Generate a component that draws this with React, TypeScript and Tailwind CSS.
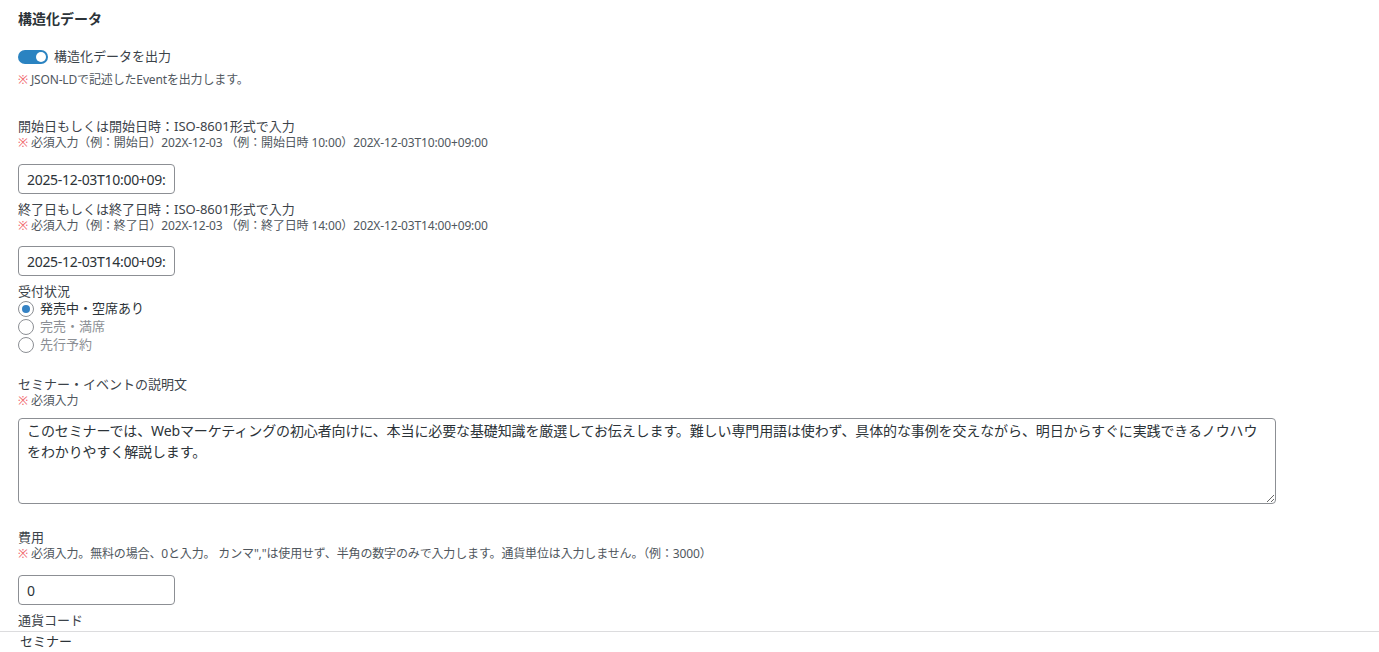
import React from 'react';

const font = "font-['Noto_Sans','Noto_Sans_CJK_JP',sans-serif]";

function Note({ children }: { children: React.ReactNode }) {
  return (
    <p className="text-[12px] leading-[16px] text-[#50575e] tracking-[-0.15px]">
      <span className="text-[#f0646a]">※</span> {children}
    </p>
  );
}

function Label({ children, className = '' }: { children: React.ReactNode; className?: string }) {
  return <p className={`text-[13px] leading-[18px] text-[#3c434a] ${className}`}>{children}</p>;
}

function TextInput({ value, className = '' }: { value: string; className?: string }) {
  return (
    <input
      type="text"
      defaultValue={value}
      className={`block w-[157px] h-[30px] px-2 rounded-[4px] border border-[#8c8f94] bg-white text-[14px] tracking-[-0.3px] text-[#2c3338] outline-none ${className}`}
    />
  );
}

function Radio({ label, checked = false }: { label: string; checked?: boolean }) {
  return (
    <label className="flex items-center gap-[6px] h-[18px]">
      <span className="flex items-center justify-center w-4 h-4 rounded-full border border-[#8c8f94] bg-white">
        {checked && <span className="w-2 h-2 rounded-full bg-[#3582c4]" />}
      </span>
      <span className={`text-[13px] ${checked ? 'text-[#2c3338]' : 'text-[#8c8f94]'}`}>{label}</span>
    </label>
  );
}

export default function App() {
  const description =
    'このセミナーでは、Webマーケティングの初心者向けに、本当に必要な基礎知識を厳選してお伝えします。難しい専門用語は使わず、具体的な事例を交えながら、明日からすぐに実践できるノウハウをわかりやすく解説します。';

  return (
    <div className={`h-screen flex flex-col bg-white ${font}`}>
      <main className="flex-1 overflow-hidden px-[18px]">
        <h2 className="mt-[10px] text-[14px] leading-[18px] font-bold text-[#2c3338]">構造化データ</h2>

        <div className="mt-[19px] flex items-center gap-[6px] h-5">
          <span className="relative w-[30px] h-[14px] rounded-full bg-[#2a83c1]">
            <span className="absolute right-[2px] top-[2px] w-[10px] h-[10px] rounded-full bg-white" />
          </span>
          <span className="text-[13px] text-[#3c434a]">構造化データを出力</span>
        </div>
        <div className="mt-[5px]">
          <Note>JSON-LDで記述したEventを出力します。</Note>
        </div>

        <Label className="mt-[29px]">開始日もしくは開始日時：ISO-8601形式で入力</Label>
        <Note>必須入力（例：開始日）202X-12-03 （例：開始日時 10:00）202X-12-03T10:00+09:00</Note>
        <TextInput value="2025-12-03T10:00+09:00" className="mt-[13px]" />

        <Label className="mt-[6px]">終了日もしくは終了日時：ISO-8601形式で入力</Label>
        <Note>必須入力（例：終了日）202X-12-03 （例：終了日時 14:00）202X-12-03T14:00+09:00</Note>
        <TextInput value="2025-12-03T14:00+09:00" className="mt-[12px]" />

        <Label className="mt-[6px]">受付状況</Label>
        <div className="flex flex-col">
          <Radio label="発売中・空席あり" checked />
          <Radio label="完売・満席" />
          <Radio label="先行予約" />
        </div>

        <Label className="mt-[21px]">セミナー・イベントの説明文</Label>
        <Note>必須入力</Note>
        <textarea
          defaultValue={description}
          className="mt-[9px] block w-[1258px] h-[86px] px-2 py-[1px] rounded-[4px] border border-[#8c8f94] bg-white text-[14px] leading-[21px] tracking-[-0.12px] text-[#2c3338] outline-none"
        />

        <Label className="mt-[24px]">費用</Label>
        <Note>必須入力。無料の場合、0と入力。 カンマ","は使用せず、半角の数字のみで入力します。通貨単位は入力しません。（例：3000）</Note>
        <TextInput value="0" className="mt-[13px]" />

        <Label className="mt-[6px]">通貨コード</Label>
      </main>

      <div className="h-[21px] shrink-0 border-t border-[#dcdcde] bg-white px-5 flex items-center">
        <span className="text-[13px] text-[#2c3338]">セミナー</span>
      </div>
    </div>
  );
}
